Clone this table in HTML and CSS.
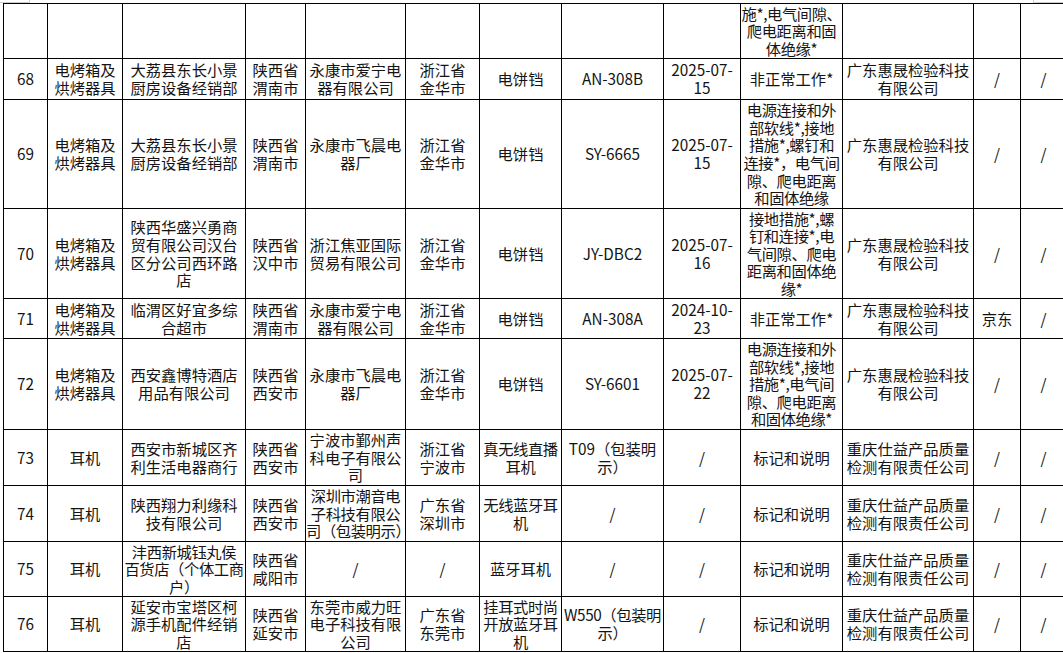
FILE: index.html
```html
<!DOCTYPE html>
<html lang="zh-CN">
<head>
<meta charset="utf-8">
<title>抽查结果</title>
<link rel="stylesheet" href="styles.css">
</head>
<body>
<div class="edge">
  <div class="edge-left"></div>
  <div class="edge-right"></div>
</div>
<div class="sheet">
<table class="grid">
  <colgroup>
    <col class="c1"><col class="c2"><col class="c3"><col class="c4"><col class="c5"><col class="c6"><col class="c7">
    <col class="c8"><col class="c9"><col class="c10"><col class="c11"><col class="c12"><col class="c13">
  </colgroup>
  <tbody>
    <tr class="r0">
      <td></td><td></td><td></td><td></td><td></td><td></td><td></td><td></td><td></td>
      <td class="tight">施*,电气间隙、<br>爬电距离和固<br>体绝缘*</td>
      <td></td><td></td><td></td>
    </tr>
    <tr class="r68">
      <td>68</td><td>电烤箱及<br>烘烤器具</td><td>大荔县东长小景<br>厨房设备经销部</td><td>陕西省<br>渭南市</td>
      <td>永康市爱宁电<br>器有限公司</td><td>浙江省<br>金华市</td><td>电饼铛</td><td>AN-308B</td><td>2025-07-<br>15</td>
      <td>非正常工作*</td><td>广东惠晟检验科技<br>有限公司</td><td>/</td><td>/</td>
    </tr>
    <tr class="r69">
      <td>69</td><td>电烤箱及<br>烘烤器具</td><td>大荔县东长小景<br>厨房设备经销部</td><td>陕西省<br>渭南市</td>
      <td>永康市飞晨电<br>器厂</td><td>浙江省<br>金华市</td><td>电饼铛</td><td>SY-6665</td><td>2025-07-<br>15</td>
      <td class="tight">电源连接和外<br>部软线*,接地<br>措施*,螺钉和<br>连接*，电气间<br>隙、爬电距离<br>和固体绝缘</td>
      <td>广东惠晟检验科技<br>有限公司</td><td>/</td><td>/</td>
    </tr>
    <tr class="r70">
      <td>70</td><td>电烤箱及<br>烘烤器具</td><td>陕西华盛兴勇商<br>贸有限公司汉台<br>区分公司西环路<br>店</td><td>陕西省<br>汉中市</td>
      <td>浙江焦亚国际<br>贸易有限公司</td><td>浙江省<br>金华市</td><td>电饼铛</td><td>JY-DBC2</td><td>2025-07-<br>16</td>
      <td class="tight">接地措施*,螺<br>钉和连接*,电<br>气间隙、爬电<br>距离和固体绝<br>缘*</td>
      <td>广东惠晟检验科技<br>有限公司</td><td>/</td><td>/</td>
    </tr>
    <tr class="r71">
      <td>71</td><td>电烤箱及<br>烘烤器具</td><td>临渭区好宜多综<br>合超市</td><td>陕西省<br>渭南市</td>
      <td>永康市爱宁电<br>器有限公司</td><td>浙江省<br>金华市</td><td>电饼铛</td><td>AN-308A</td><td>2024-10-<br>23</td>
      <td>非正常工作*</td><td>广东惠晟检验科技<br>有限公司</td><td>京东</td><td>/</td>
    </tr>
    <tr class="r72">
      <td>72</td><td>电烤箱及<br>烘烤器具</td><td>西安鑫博特酒店<br>用品有限公司</td><td>陕西省<br>西安市</td>
      <td>永康市飞晨电<br>器厂</td><td>浙江省<br>金华市</td><td>电饼铛</td><td>SY-6601</td><td>2025-07-<br>22</td>
      <td class="tight">电源连接和外<br>部软线*,接地<br>措施*,电气间<br>隙、爬电距离<br>和固体绝缘*</td>
      <td>广东惠晟检验科技<br>有限公司</td><td>/</td><td>/</td>
    </tr>
    <tr class="r73">
      <td>73</td><td>耳机</td><td>西安市新城区齐<br>利生活电器商行</td><td>陕西省<br>西安市</td>
      <td>宁波市鄞州声<br>科电子有限公<br>司</td><td>浙江省<br>宁波市</td><td class="tight">真无线直播<br>耳机</td><td>T09（包装明<br>示）</td><td>/</td>
      <td>标记和说明</td><td>重庆仕益产品质量<br>检测有限责任公司</td><td>/</td><td>/</td>
    </tr>
    <tr class="r74">
      <td>74</td><td>耳机</td><td>陕西翔力利缘科<br>技有限公司</td><td>陕西省<br>西安市</td>
      <td class="tight">深圳市潮音电<br>子科技有限公<br>司（包装明示）</td><td>广东省<br>深圳市</td><td class="tight">无线蓝牙耳<br>机</td><td>/</td><td>/</td>
      <td>标记和说明</td><td>重庆仕益产品质量<br>检测有限责任公司</td><td>/</td><td>/</td>
    </tr>
    <tr class="r75">
      <td>75</td><td>耳机</td><td class="tight">沣西新城钰丸侯<br>百货店（个体工商<br>户）</td><td>陕西省<br>咸阳市</td>
      <td>/</td><td>/</td><td>蓝牙耳机</td><td>/</td><td>/</td>
      <td>标记和说明</td><td>重庆仕益产品质量<br>检测有限责任公司</td><td>/</td><td>/</td>
    </tr>
    <tr class="r76">
      <td>76</td><td>耳机</td><td>延安市宝塔区柯<br>源手机配件经销<br>店</td><td>陕西省<br>延安市</td>
      <td>东莞市威力旺<br>电子科技有限<br>公司</td><td>广东省<br>东莞市</td><td class="tight">挂耳式时尚<br>开放蓝牙耳<br>机</td><td class="tight">W550（包装明<br>示）</td><td>/</td>
      <td>标记和说明</td><td>重庆仕益产品质量<br>检测有限责任公司</td><td>/</td><td>/</td>
    </tr>
  </tbody>
</table>
</div>
</body>
</html>
```

FILE: styles.css
```css
html, body {
  margin: 0;
  padding: 0;
  background: #ffffff;
  overflow: hidden;
}

body {
  width: 1063px;
  height: 653px;
}

.edge {
  display: flex;
  justify-content: space-between;
  height: 3px;
}

.edge-left {
  width: 29px;
  height: 2px;
  border-right: 1px solid #cfcfcf;
  border-bottom: 1px solid #cfcfcf;
}

.edge-right {
  width: 29px;
  height: 2px;
  border-left: 1px solid #cfcfcf;
  border-bottom: 1px solid #cfcfcf;
}

.sheet {
  padding-left: 3px;
}

.grid {
  border-collapse: collapse;
  table-layout: fixed;
  width: 1063px;
  font-family: "Noto Sans CJK SC", "Microsoft YaHei", sans-serif;
  font-size: 15.3px;
  line-height: 17.6px;
  color: #141414;
}

.grid td {
  border: 1px solid #000;
  padding: 0;
  text-align: center;
  vertical-align: middle;
  white-space: nowrap;
  overflow: hidden;
}

.grid td.tight {
  letter-spacing: -0.4px;
}

.c1 { width: 44px; }
.c2 { width: 75px; }
.c3 { width: 123px; }
.c4 { width: 60px; }
.c5 { width: 100px; }
.c6 { width: 74px; }
.c7 { width: 82px; }
.c8 { width: 102px; }
.c9 { width: 77px; }
.c10 { width: 102px; }
.c11 { width: 131px; }
.c12 { width: 47px; }
.c13 { width: 46px; }

.r0 { height: 55px; }
.r68 { height: 41px; }
.r69 { height: 109px; }
.r70 { height: 90px; }
.r71 { height: 40px; }
.r72 { height: 91px; }
.r73 { height: 56px; }
.r74 { height: 56px; }
.r75 { height: 55px; }
.r76 { height: 55px; }
```
